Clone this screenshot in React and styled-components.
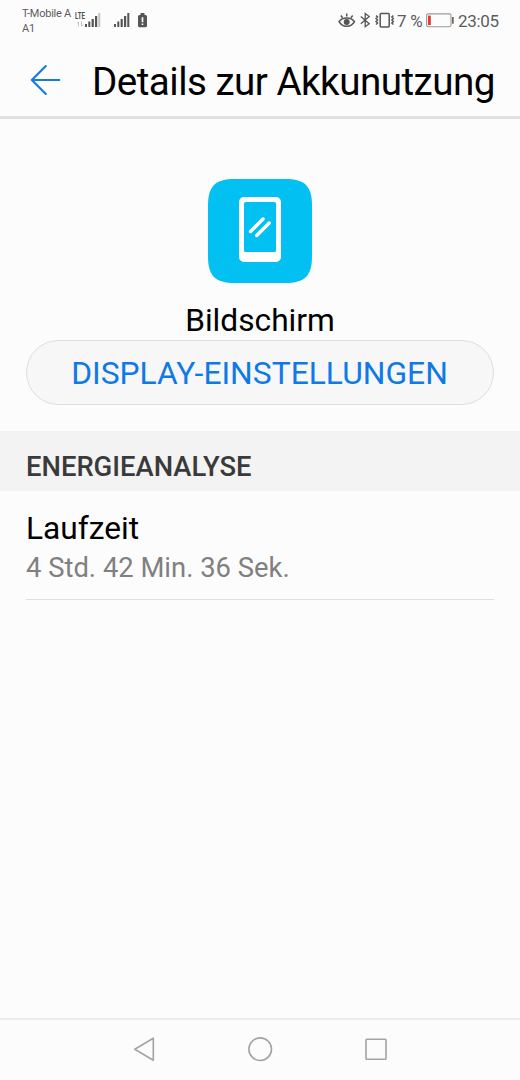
import React from "react";
import styled, { createGlobalStyle } from "styled-components";

const GlobalStyle = createGlobalStyle`
  * { box-sizing: border-box; }
  body { margin: 0; background: #fcfcfc; }
`;

const Screen = styled.div`
  width: 520px;
  height: 1080px;
  display: flex;
  flex-direction: column;
  background: #fcfcfc;
  color: #000;
  font-family: Roboto, "Liberation Sans", sans-serif;
  white-space: nowrap;
  overflow: hidden;
`;

const StatusBar = styled.header`
  height: 42px;
  flex: none;
  display: flex;
  justify-content: space-between;
  padding: 0 21px 0 22px;
  color: #5c5c5c;
`;

const StatusGroup = styled.div`
  display: flex;
  align-items: flex-start;
`;

const Carrier = styled.div`
  width: 53px;
  padding-top: 6px;
  font-size: 11px;
  line-height: 15px;
  letter-spacing: -0.25px;
`;

const SignalColumn = styled.div`
  display: flex;
  margin-right: ${(p) => p.$gap || 0}px;
  padding-top: 12px;
`;

const NetworkType = styled.div`
  width: 10px;
  display: flex;
  flex-direction: column;
`;

const NetworkLabel = styled.span`
  font-size: 9px;
  font-weight: 700;
  line-height: 9px;
  transform: scaleX(0.68);
  transform-origin: left;
  color: #4c4c4c;
`;

const StatusIcon = styled.svg`
  display: block;
  flex: none;
  margin-top: 12px;
  margin-right: ${(p) => p.$gap || 0}px;
`;

const StatusText = styled.span`
  width: ${(p) => p.$w}px;
  padding-top: 11px;
  font-size: 17px;
  line-height: 21px;
  letter-spacing: ${(p) => p.$ls || 0}px;
`;

const TitleBar = styled.div`
  height: 77px;
  flex: none;
  display: flex;
  align-items: flex-start;
  border-bottom: 3px solid #e0e0e0;
  padding-left: 30px;
`;

const BackIcon = styled.svg`
  display: block;
  margin: 22px 31px 0 0;
`;

const Title = styled.h1`
  margin: 17px 0 0;
  font-size: 38.6px;
  line-height: 45px;
  font-weight: 400;
  letter-spacing: -0.52px;
`;

const Hero = styled.section`
  height: 312px;
  flex: none;
  display: flex;
  flex-direction: column;
  align-items: center;
  padding: 60px 26px 0;
`;

const AppName = styled.div`
  margin-top: 19px;
  height: 38px;
  font-size: 31.7px;
  line-height: 38px;
`;

const SettingsButton = styled.button`
  width: 468px;
  height: 65px;
  flex: none;
  padding: 0 1px 0 0;
  border: 1px solid #dedede;
  border-radius: 33px;
  background: #f7f7f7;
  color: #0f7ae6;
  font-family: inherit;
  font-size: 31.8px;
  line-height: 38px;
`;

const SectionHeader = styled.h2`
  height: 60px;
  flex: none;
  margin: 0;
  padding: 20px 26px 0;
  background: #f3f3f3;
  color: #3a3a3a;
  font-size: 27.4px;
  line-height: 32px;
  font-weight: 500;
`;

const InfoRow = styled.div`
  height: 109px;
  flex: none;
  margin: 0 26px;
  padding-top: 19px;
  border-bottom: 1px solid #dfdfdf;
`;

const InfoLabel = styled.div`
  font-size: 31.7px;
  line-height: 38px;
`;

const InfoValue = styled.div`
  margin-top: 4px;
  font-size: 27.4px;
  line-height: 32px;
  color: #808080;
`;

const Spacer = styled.div`
  flex: 1;
`;

const NavBar = styled.nav`
  height: 62px;
  flex: none;
  display: flex;
  justify-content: center;
  gap: 91px;
  border-top: 2px solid #ebebeb;
  padding: 16px 0 0;
`;

const NavIcon = styled.svg`
  display: block;
  fill: none;
  stroke: #a3a3a3;
  stroke-width: 1.6;
  stroke-linejoin: round;
`;

function Signal({ faded }) {
  return (
    <svg width="17" height="16" viewBox="0 0 17 16" fill="#555">
      <rect x="0" y="12" width="2" height="3" />
      <rect x="3.3" y="9.5" width="2" height="5.5" />
      <rect x="6.6" y="7" width="2.2" height="8" />
      <rect x="10" y="4" width="2.2" height="11" />
      <rect x="13.3" y="1" width="2" height="14" fill={faded ? "#c4c4c4" : "#555"} />
    </svg>
  );
}

export default function App() {
  return (
    <Screen>
      <GlobalStyle />
      <StatusBar>
        <StatusGroup>
          <Carrier>
            T-Mobile A
            <br />
            A1
          </Carrier>
          <SignalColumn $gap={12}>
            <NetworkType>
              <NetworkLabel>LTE</NetworkLabel>
              <svg width="10" height="6" viewBox="0 0 10 6" fill="none" stroke="#bbb" strokeWidth="0.9">
                <path d="M3.5 5.5V1L2 2.5M6.5 0.5V5L8 3.5" />
              </svg>
            </NetworkType>
            <Signal faded />
          </SignalColumn>
          <SignalColumn $gap={7}>
            <Signal />
          </SignalColumn>
          <StatusIcon width="9" height="16" viewBox="0 0 9 16">
            <path d="M2.5 1h4v2h1a1.5 1.5 0 0 1 1.5 1.5v9.2a1.5 1.5 0 0 1-1.5 1.5h-6A1.5 1.5 0 0 1 0 13.7V4.5A1.5 1.5 0 0 1 1.5 3h1z" fill="#555" />
            <path d="M4.5 5.2v5M4.5 11.4v1.7" stroke="#fcfcfc" strokeWidth="1.7" />
          </StatusIcon>
        </StatusGroup>
        <StatusGroup>
          <StatusIcon $gap={4} width="18" height="16" viewBox="0 0 18 16" fill="none" stroke="#555" strokeWidth="1.5">
            <path d="M1 9.7C4.5 4.8 13 4.8 16.5 9.7C13 15.8 4.5 15.8 1 9.7Z" />
            <path d="M2.8 3.5l1.8 2.3M8.7 1.4v3M14.7 3.5l-1.8 2.3" />
            <circle cx="8.7" cy="9.9" r="3" fill="#555" stroke="none" />
          </StatusIcon>
          <StatusIcon $gap={4} width="11" height="16" viewBox="0 0 11 16" fill="none" stroke="#555" strokeWidth="1.3">
            <path d="M0.8 4.5L9.2 11.8L5.2 14.7V1.5L9.2 4.6L0.8 11.7" />
          </StatusIcon>
          <StatusIcon $gap={2} width="20" height="16" viewBox="0 0 20 16" fill="none" stroke="#555">
            <rect x="5.2" y="1.5" width="9" height="13.4" rx="1" strokeWidth="1.5" />
            <path d="M1 3.6l1.6 1.4L1 6.5l1.6 1.5L1 9.5l1.6 1.5L1 12.5M18.4 3.6l-1.6 1.4 1.6 1.5-1.6 1.5 1.6 1.5-1.6 1.5 1.6 1.5" strokeWidth="1.4" />
          </StatusIcon>
          <StatusText $w={29} $ls={-0.2}>7 %</StatusText>
          <StatusIcon $gap={3} width="29" height="16" viewBox="0 0 29 16">
            <rect x="0.6" y="1.9" width="24.4" height="12.8" rx="1.6" fill="none" stroke="#999" strokeWidth="1.1" />
            <rect x="2" y="3.6" width="2.8" height="9.4" fill="#e23a2c" />
            <rect x="26" y="5" width="1.7" height="6.7" fill="#666" />
          </StatusIcon>
          <StatusText $w={41} $ls={-0.3}>23:05</StatusText>
        </StatusGroup>
      </StatusBar>
      <TitleBar>
        <BackIcon width="31" height="32" viewBox="0 0 31 32" fill="none" stroke="#147adf" strokeWidth="2.1" strokeLinecap="round" strokeLinejoin="round">
          <path d="M29.3 16H1.8M15.8 2L1.8 16L15.8 30" />
        </BackIcon>
        <Title>Details zur Akkunutzung</Title>
      </TitleBar>
      <Hero>
        <svg width="104" height="104" viewBox="0 0 104 104">
          <path d="M27 0H77C97 0 104 7 104 27V77C104 97 97 104 77 104H27C7 104 0 97 0 77V27C0 7 7 0 27 0Z" fill="#03c0f3" />
          <path fillRule="evenodd" d="M36 18H68A5 5 0 0 1 73 23V78A5 5 0 0 1 68 83H36A5 5 0 0 1 31 78V23A5 5 0 0 1 36 18ZM37.5 23A1.5 1.5 0 0 0 36 24.5V71.5A1.5 1.5 0 0 0 37.5 73H66.5A1.5 1.5 0 0 0 68 71.5V24.5A1.5 1.5 0 0 0 66.5 23Z" fill="#fff" />
          <path d="M42.5 52.5L55 40M48.7 56.5L61.2 44" stroke="#fff" strokeWidth="3.4" strokeLinecap="round" />
        </svg>
        <AppName>Bildschirm</AppName>
        <SettingsButton>DISPLAY-EINSTELLUNGEN</SettingsButton>
      </Hero>
      <SectionHeader>ENERGIEANALYSE</SectionHeader>
      <InfoRow>
        <InfoLabel>Laufzeit</InfoLabel>
        <InfoValue>4 Std. 42 Min. 36 Sek.</InfoValue>
      </InfoRow>
      <Spacer />
      <NavBar>
        <NavIcon width="25" height="26" viewBox="0 0 25 26">
          <path d="M2.8 13.2L21.3 2.2V24.2Z" />
        </NavIcon>
        <NavIcon width="25" height="26" viewBox="0 0 25 26">
          <circle cx="12.2" cy="13.2" r="11.3" />
        </NavIcon>
        <NavIcon width="25" height="26" viewBox="0 0 25 26">
          <rect x="2" y="3.2" width="20" height="20" rx="0.8" />
        </NavIcon>
      </NavBar>
    </Screen>
  );
}
